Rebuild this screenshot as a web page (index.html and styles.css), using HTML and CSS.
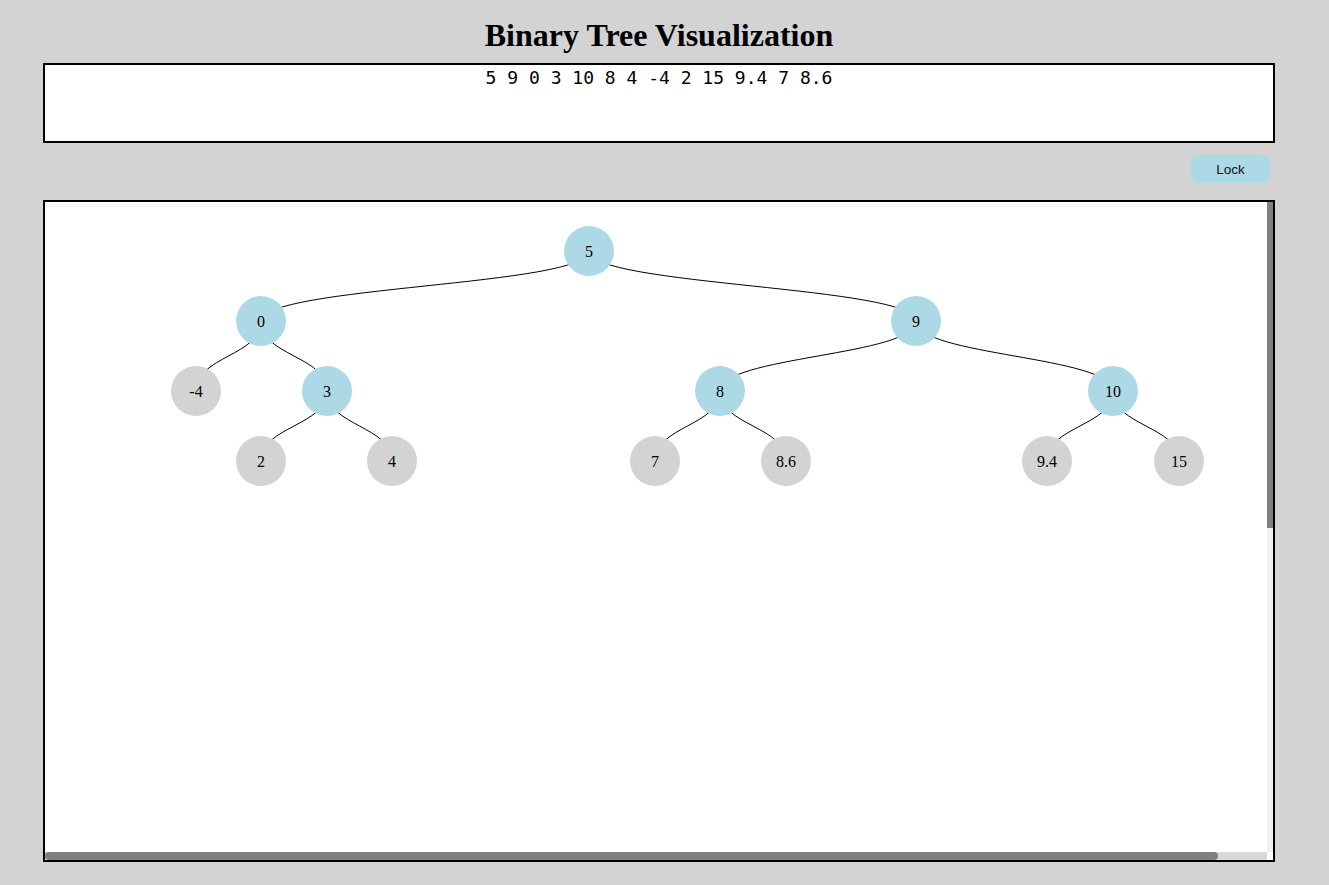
FILE: index.html
```html
<!DOCTYPE html>
<html lang="en">
<head>
  <meta charset="UTF-8">
  <meta name="viewport" content="width=device-width, initial-scale=1.0">
  <title>Binary Tree Visualization</title>
  <link rel="stylesheet" href="styles.css">
</head>
<body>
  <h1>Binary Tree Visualization</h1>

  <textarea class="values" spellcheck="false">5 9 0 3 10 8 4 -4 2 15 9.4 7 8.6</textarea>

  <div class="controls">
    <button class="lock">Lock</button>
  </div>

  <div class="tree-frame">
    <div class="tree">
      <svg class="tree-svg" width="1272" height="1300">
        <g class="links">
          <path d="M544,49 C544,84 216,84 216,119"/>
          <path d="M544,49 C544,84 871,84 871,119"/>
          <path d="M216,119 C216,154 151,154 151,189"/>
          <path d="M216,119 C216,154 282,154 282,189"/>
          <path d="M871,119 C871,154 675,154 675,189"/>
          <path d="M871,119 C871,154 1068,154 1068,189"/>
          <path d="M282,189 C282,224 216,224 216,259"/>
          <path d="M282,189 C282,224 347,224 347,259"/>
          <path d="M675,189 C675,224 610,224 610,259"/>
          <path d="M675,189 C675,224 741,224 741,259"/>
          <path d="M1068,189 C1068,224 1002,224 1002,259"/>
          <path d="M1068,189 C1068,224 1134,224 1134,259"/>
        </g>
        <g class="nodes">
          <g class="node inner" transform="translate(544,49)"><circle r="25"/><text dy=".35em">5</text></g>
          <g class="node inner" transform="translate(216,119)"><circle r="25"/><text dy=".35em">0</text></g>
          <g class="node inner" transform="translate(871,119)"><circle r="25"/><text dy=".35em">9</text></g>
          <g class="node leaf" transform="translate(151,189)"><circle r="25"/><text dy=".35em">-4</text></g>
          <g class="node inner" transform="translate(282,189)"><circle r="25"/><text dy=".35em">3</text></g>
          <g class="node inner" transform="translate(675,189)"><circle r="25"/><text dy=".35em">8</text></g>
          <g class="node inner" transform="translate(1068,189)"><circle r="25"/><text dy=".35em">10</text></g>
          <g class="node leaf" transform="translate(216,259)"><circle r="25"/><text dy=".35em">2</text></g>
          <g class="node leaf" transform="translate(347,259)"><circle r="25"/><text dy=".35em">4</text></g>
          <g class="node leaf" transform="translate(610,259)"><circle r="25"/><text dy=".35em">7</text></g>
          <g class="node leaf" transform="translate(741,259)"><circle r="25"/><text dy=".35em">8.6</text></g>
          <g class="node leaf" transform="translate(1002,259)"><circle r="25"/><text dy=".35em">9.4</text></g>
          <g class="node leaf" transform="translate(1134,259)"><circle r="25"/><text dy=".35em">15</text></g>
        </g>
      </svg>
    </div>
    <!-- drawn scrollbars, the native ones are hidden -->
    <div class="scroll-y"><div class="thumb-y"></div></div>
    <div class="scroll-x"><div class="thumb-x"></div></div>
  </div>
</body>
</html>
```

FILE: styles.css
```css
* { box-sizing: border-box; }
body {
  margin: 0;
  padding: 0 54px 0 43px;
  background-color: #d3d3d3;
  font-family: 'Liberation Serif', 'Times New Roman', serif;
  color: #000;
}
h1 {
  font-size: 32px;
  line-height: 36px;
  text-align: center;
  margin: 17px 0 10px;
}
.values {
  display: block;
  width: 100%;
  height: 80px;
  margin: 0;
  padding: 2px;
  border: 2px solid #000;
  background: #fff;
  font-family: 'DejaVu Sans Mono', monospace;
  font-size: 18px;
  text-align: center;
  resize: none;
  outline: none;
}
.controls {
  display: flex;
  justify-content: flex-end;
  padding: 12px 5px 17px 0;
}
.lock {
  width: 79px;
  height: 28px;
  border: none;
  border-radius: 8px;
  background: #add8e6;
  color: #111;
  font-family: 'Liberation Sans', Arial, sans-serif;
  font-size: 13.5px;
  cursor: pointer;
}
.tree-frame {
  position: relative;
  height: 662px;
  border: 2px solid #000;
  background: #fff;
}
.tree {
  height: 100%;
  overflow: auto;
  scrollbar-width: none;
}
.tree-svg {
  display: block;
}
.scroll-y {
  position: absolute;
  top: 0;
  right: 0;
  bottom: 8px;
  width: 6px;
  background: #f1f1f1;
}
.thumb-y {
  height: 326px;
  background: #808080;
}
.scroll-x {
  position: absolute;
  left: 0;
  right: 6px;
  bottom: 0;
  height: 8px;
  background: #d9d9d9;
}
.thumb-x {
  width: 1173px;
  height: 100%;
  background: #808080;
  border-radius: 4px;
}
.links path {
  fill: none;
  stroke: #000;
  stroke-width: 1px;
}
.node circle { stroke: none; }
.node.inner circle { fill: #add8e6; }
.node.leaf circle { fill: #d3d3d3; }
.node text {
  font-family: 'Liberation Serif', 'Times New Roman', serif;
  font-size: 16px;
  text-anchor: middle;
  fill: #000;
}
```
